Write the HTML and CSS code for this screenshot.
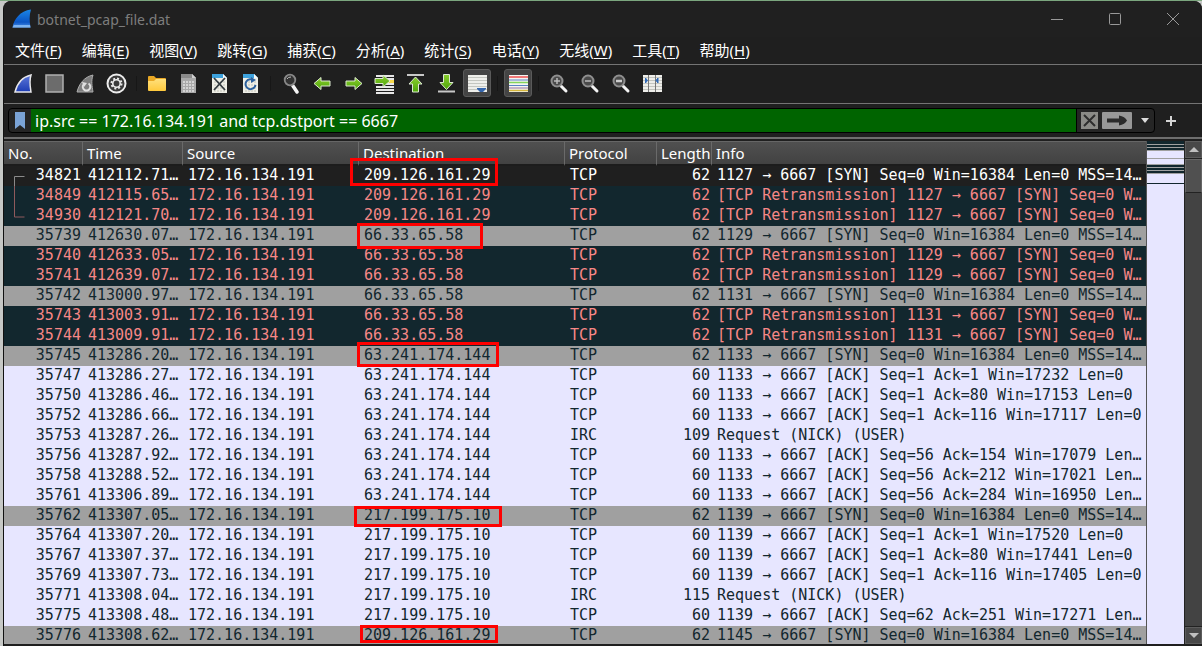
FILE: index.html
```html
<!DOCTYPE html>
<html lang="zh-CN">
<head>
<meta charset="utf-8">
<title>botnet_pcap_file.dat</title>
<link rel="stylesheet" href="styles.css">
</head>
<body>
<svg class="defs" aria-hidden="true">
  <defs>
    <linearGradient id="blueFin" x1="0" y1="0" x2="0" y2="1"><stop offset="0" stop-color="#1b86e6"/><stop offset=".7" stop-color="#0a55c4"/><stop offset="1" stop-color="#4f93ea"/></linearGradient>
    <linearGradient id="startFin" x1="0" y1="0" x2="0" y2="1"><stop offset="0" stop-color="#5d78d8"/><stop offset="1" stop-color="#1d3cb4"/></linearGradient>
    <linearGradient id="green" x1="0" y1="0" x2="0" y2="1"><stop offset="0" stop-color="#8ace2e"/><stop offset="1" stop-color="#4fa60a"/></linearGradient>
    <linearGradient id="folder" x1="0" y1="0" x2="0" y2="1"><stop offset="0" stop-color="#ffe07c"/><stop offset="1" stop-color="#ffc93c"/></linearGradient>
    <g id="page"><path d="M3 1h11l4 4v15H3z" fill="#eeeee6"/><path d="M3 1h11l4 4H3z" fill="#3da2dd"/><path d="M14 1v4h4z" fill="#f8f8f8"/><path d="M5 9h11M5 12h11M5 15h11M5 18h11" stroke="#c3c3b8" stroke-dasharray="2 1"/></g>
    <g id="lens"><path d="m12 13 5 5" stroke="#f4f4f4" stroke-width="3" stroke-linecap="round"/><circle cx="8" cy="8" r="5.500" fill="#4a4a4a" stroke="#8f8f8f" stroke-width="2"/></g>
    <g id="list"><path d="M1 2h19v17H1z" fill="#eeeeea"/><path d="M1 4.500h19M1 7.500h19M1 10.500h19M1 13.500h19M1 16.500h19" stroke="#c4c6c0"/></g>
  </defs>
</svg>
<div class="app">
  <header class="titlebar">
    <svg class="logo" viewBox="0 0 20 20" aria-hidden="true"><path d="M.5 18.500C2 10 8 2 19 .5c-2 6-1.500 12-.5 18z" fill="url(#blueFin)"/><path d="M.5 18.500 2 16h16l.5 2.500z" fill="#7db4f2"/></svg>
    <span class="title">botnet_pcap_file.dat</span>
    <button class="win" aria-label="Minimize"><svg viewBox="0 0 14 14"><path d="M1 7.500h12"/></svg></button>
    <button class="win" aria-label="Maximize"><svg viewBox="0 0 14 14"><rect x="1.500" y="1.500" width="11" height="11" rx="1"/></svg></button>
    <button class="win" aria-label="Close"><svg viewBox="0 0 14 14"><path d="m1 1 12 12M13 1 1 13"/></svg></button>
  </header>
  <nav class="menubar">
    <button>文件(<u>F</u>)</button><button>编辑(<u>E</u>)</button><button>视图(<u>V</u>)</button><button>跳转(<u>G</u>)</button><button>捕获(<u>C</u>)</button><button>分析(<u>A</u>)</button><button>统计(<u>S</u>)</button><button>电话(<u>Y</u>)</button><button>无线(<u>W</u>)</button><button>工具(<u>T</u>)</button><button>帮助(<u>H</u>)</button>
  </nav>
  <div class="toolbar">
    <button aria-label="Start capture"><svg viewBox="0 0 21 21"><path d="M2 19C4 11 9 4 18 2c-2 6-1 11 0 17z" fill="url(#startFin)" stroke="#e6e6ea" stroke-width="1.500"/></svg></button>
    <button aria-label="Stop capture"><svg viewBox="0 0 21 21"><rect x="2" y="2" width="17" height="17" fill="#6c6c6c" stroke="#b0b0b0" stroke-width="1.500"/></svg></button>
    <button aria-label="Restart capture"><svg viewBox="0 0 21 21"><path d="M2 19C4 11 9 4 18 2c-2 6-1 11 0 17z" fill="#7d7d7d" stroke="#adadad"/><path d="M8.500 11.500a3.800 3.800 0 1 0 5-1" fill="none" stroke="#e0e0e0" stroke-width="2"/><path d="m7 9 5 1-3 4z" fill="#e0e0e0"/></svg></button>
    <button aria-label="Capture options"><svg viewBox="0 0 21 21"><circle cx="10.500" cy="10.500" r="9" fill="#3a3a3a" stroke="#ececec" stroke-width="2"/><circle cx="10.500" cy="10.500" r="5" fill="none" stroke="#e8e8e8" stroke-width="2" stroke-dasharray="1.960 1.960"/><circle cx="10.500" cy="10.500" r="3.700" fill="none" stroke="#e8e8e8" stroke-width="1.600"/></svg></button>
    <span class="sep"></span>
    <button aria-label="Open"><svg viewBox="0 0 21 21"><path d="M1 4q0-1 1-1h5l2 2h9q1 0 1 1v4H1z" fill="#e9a825"/><path d="M1 8h6l2-2h10v11q0 1-1 1H2q-1 0-1-1z" fill="url(#folder)"/></svg></button>
    <button aria-label="Save"><svg viewBox="0 0 21 21"><path d="M3 1h11l4 4v15H3z" fill="#a9a9a9"/><path d="M3 1h11l4 4H3z" fill="#8b8b8b"/><path d="M14 1v4h4z" fill="#d0d0d0"/><path d="M5 9h11M5 12h11M5 15h11M5 18h11" stroke="#d4d4d4" stroke-width="2" stroke-dasharray="2 1"/></svg></button>
    <button aria-label="Close file"><svg viewBox="0 0 21 21"><use href="#page"/><path d="m5 5 11 12M16 5 5 17" stroke="#333b40" stroke-width="1.800"/></svg></button>
    <button aria-label="Reload file"><svg viewBox="0 0 21 21"><use href="#page"/><path d="M14 7.500A5 5 0 1 0 15.500 12" fill="none" stroke="#2c619e" stroke-width="2"/><path d="M11 4v6l5-3z" fill="#2c619e"/></svg></button>
    <span class="sep"></span>
    <button aria-label="Find packet"><svg viewBox="0 0 21 21"><path d="m12 13 4 6" stroke="#f4f4f4" stroke-width="3.500" stroke-linecap="round"/><circle cx="9" cy="7" r="5.300" fill="#333" stroke="#888" stroke-width="1.800"/><path d="M6 6q1-2 4-2" fill="none" stroke="#bbb"/></svg></button>
    <button aria-label="Back"><svg viewBox="0 0 21 21"><path d="m2 10.500 7-6v3.500h9v5H9v3.500z" fill="url(#green)" stroke="#dde9d2"/></svg></button>
    <button aria-label="Forward"><svg viewBox="0 0 21 21"><path d="m19 10.500-7-6v3.500H3v5h9v3.500z" fill="url(#green)" stroke="#dde9d2"/></svg></button>
    <button aria-label="Go to packet"><svg viewBox="0 0 21 21"><path d="M2 3h18M2 14h18M2 17h18M2 20h18" stroke="#e6e6e6" stroke-width="2"/><path d="M12 6h8M12 11h8" stroke="#e6e6e6" stroke-width="2"/><path d="M12 8.500h8" stroke="#f6d84a" stroke-width="3"/><path d="M16 8 9 2v3.500H1v5h8V14z" fill="url(#green)" stroke="#dde9d2"/></svg></button>
    <button aria-label="First packet"><svg viewBox="0 0 21 21"><path d="M2 2h17" stroke="#c8c8c8" stroke-width="1.800"/><path d="m10.500 4 6.500 7h-3.500v8h-6v-8H4z" fill="url(#green)" stroke="#dde9d2"/></svg></button>
    <button aria-label="Last packet"><svg viewBox="0 0 21 21"><path d="M2 18.500h17" stroke="#c8c8c8" stroke-width="1.800"/><path d="m10.500 16.500 6.500-7h-3.500v-8h-6v8H4z" fill="url(#green)" stroke="#dde9d2"/></svg></button>
    <button class="on" aria-label="Auto scroll" aria-pressed="true"><svg viewBox="0 0 21 21"><use href="#list"/><path d="M10 15h9v1l-3 3h-3l-3-3z" fill="#3566ad"/></svg></button>
    <span class="sep"></span>
    <button class="on" aria-label="Colorize" aria-pressed="true"><svg viewBox="0 0 21 21"><path d="M1 2h19v17H1z" fill="#f4f4f1"/><path d="M1 4h19" stroke="#ef4f4f" stroke-width="1.500"/><path d="M1 7h19" stroke="#5a82c4"/><path d="M1 9.500h19" stroke="#84d45c" stroke-width="1.500"/><path d="M1 12.500h19" stroke="#5a82c4"/><path d="M1 15h19" stroke="#93719f"/><path d="M1 17.500h19" stroke="#d5b63c" stroke-width="1.500"/></svg></button>
    <span class="sep"></span>
    <button aria-label="Zoom in"><svg viewBox="0 0 21 21"><use href="#lens"/><path d="M5 8h6M8 5v6" stroke="#bbb" stroke-width="1.500"/></svg></button>
    <button aria-label="Zoom out"><svg viewBox="0 0 21 21"><use href="#lens"/><path d="M5 8h6" stroke="#bbb" stroke-width="1.500"/></svg></button>
    <button aria-label="Normal size"><svg viewBox="0 0 21 21"><use href="#lens"/><path d="M5 8h6" stroke="#ccc" stroke-width="2.500"/></svg></button>
    <button aria-label="Resize columns"><svg viewBox="0 0 21 21"><use href="#list"/><path d="M6.500 2v17M13.500 2v17" stroke="#777"/><path d="m3.500 5 2 2.500-2 2.500zM16 5l-2 2.500 2 2.500z" fill="#2f68b5" stroke="#2f68b5"/></svg></button>
  </div>
  <div class="filterbar">
    <div class="filter">
      <button class="bookmark" aria-label="Bookmarks"><svg viewBox="0 0 12 18"><path d="M1 0h10v17l-5-4-5 4z" fill="#7aa3d6"/></svg></button>
      <input type="text" aria-label="Display filter" value="ip.src == 172.16.134.191 and tcp.dstport == 6667" spellcheck="false">
      <button class="clear" aria-label="Clear"><svg viewBox="0 0 17 17"><path fill="#8b8b87" d="M0 0h17v17H0z"/><path d="m3 3 11 11M14 3 3 14" stroke="#2d2d2d" stroke-width="2"/></svg></button>
      <button class="apply" aria-label="Apply"><svg viewBox="0 0 30 17"><rect width="30" height="17" rx="1" fill="#989898"/><path d="M5 6.500h12V3.500q6 1 8 5-2 4-8 5v-3H5z" fill="#2b2b2b"/></svg></button>
      <button class="recent" aria-label="Recent filters"><svg viewBox="0 0 8 5"><path d="M0 0h8L4 5z" fill="#ddd"/></svg></button>
    </div>
    <button class="add" aria-label="Add filter"><svg viewBox="0 0 10 10"><path d="M5 0v10M0 5h10" stroke="#d4d4d4" stroke-width="2"/></svg></button>
  </div>
  <main class="packets">
    <div class="list">
      <table>
        <colgroup><col class="c-no"><col class="c-time"><col class="c-src"><col class="c-dst"><col class="c-proto"><col class="c-len"><col></colgroup>
        <thead><tr><th>No.</th><th>Time</th><th>Source</th><th>Destination</th><th>Protocol</th><th>Length</th><th>Info</th></tr></thead>
        <tbody>
          <tr class="sel"><td><svg class="bracket" viewBox="0 0 11 42" aria-hidden="true"><path d="M10.500 .5H.5v10" stroke="#8a8a8a"/><path d="M.5 10v31h10" stroke="#8f5a5c"/></svg>34821</td><td>412112.71…</td><td>172.16.134.191</td><td>209.126.161.29</td><td>TCP</td><td>62</td><td>1127 → 6667 [SYN] Seq=0 Win=16384 Len=0 MSS=14…</td></tr>
          <tr class="bad"><td>34849</td><td>412115.65…</td><td>172.16.134.191</td><td>209.126.161.29</td><td>TCP</td><td>62</td><td>[TCP Retransmission] 1127 → 6667 [SYN] Seq=0 W…</td></tr>
          <tr class="bad"><td>34930</td><td>412121.70…</td><td>172.16.134.191</td><td>209.126.161.29</td><td>TCP</td><td>62</td><td>[TCP Retransmission] 1127 → 6667 [SYN] Seq=0 W…</td></tr>
          <tr class="syn"><td>35739</td><td>412630.07…</td><td>172.16.134.191</td><td>66.33.65.58</td><td>TCP</td><td>62</td><td>1129 → 6667 [SYN] Seq=0 Win=16384 Len=0 MSS=14…</td></tr>
          <tr class="bad"><td>35740</td><td>412633.05…</td><td>172.16.134.191</td><td>66.33.65.58</td><td>TCP</td><td>62</td><td>[TCP Retransmission] 1129 → 6667 [SYN] Seq=0 W…</td></tr>
          <tr class="bad"><td>35741</td><td>412639.07…</td><td>172.16.134.191</td><td>66.33.65.58</td><td>TCP</td><td>62</td><td>[TCP Retransmission] 1129 → 6667 [SYN] Seq=0 W…</td></tr>
          <tr class="syn"><td>35742</td><td>413000.97…</td><td>172.16.134.191</td><td>66.33.65.58</td><td>TCP</td><td>62</td><td>1131 → 6667 [SYN] Seq=0 Win=16384 Len=0 MSS=14…</td></tr>
          <tr class="bad"><td>35743</td><td>413003.91…</td><td>172.16.134.191</td><td>66.33.65.58</td><td>TCP</td><td>62</td><td>[TCP Retransmission] 1131 → 6667 [SYN] Seq=0 W…</td></tr>
          <tr class="bad"><td>35744</td><td>413009.91…</td><td>172.16.134.191</td><td>66.33.65.58</td><td>TCP</td><td>62</td><td>[TCP Retransmission] 1131 → 6667 [SYN] Seq=0 W…</td></tr>
          <tr class="syn"><td>35745</td><td>413286.20…</td><td>172.16.134.191</td><td>63.241.174.144</td><td>TCP</td><td>62</td><td>1133 → 6667 [SYN] Seq=0 Win=16384 Len=0 MSS=14…</td></tr>
          <tr><td>35747</td><td>413286.27…</td><td>172.16.134.191</td><td>63.241.174.144</td><td>TCP</td><td>60</td><td>1133 → 6667 [ACK] Seq=1 Ack=1 Win=17232 Len=0</td></tr>
          <tr><td>35750</td><td>413286.46…</td><td>172.16.134.191</td><td>63.241.174.144</td><td>TCP</td><td>60</td><td>1133 → 6667 [ACK] Seq=1 Ack=80 Win=17153 Len=0</td></tr>
          <tr><td>35752</td><td>413286.66…</td><td>172.16.134.191</td><td>63.241.174.144</td><td>TCP</td><td>60</td><td>1133 → 6667 [ACK] Seq=1 Ack=116 Win=17117 Len=0</td></tr>
          <tr><td>35753</td><td>413287.26…</td><td>172.16.134.191</td><td>63.241.174.144</td><td>IRC</td><td>109</td><td>Request (NICK) (USER)</td></tr>
          <tr><td>35756</td><td>413287.92…</td><td>172.16.134.191</td><td>63.241.174.144</td><td>TCP</td><td>60</td><td>1133 → 6667 [ACK] Seq=56 Ack=154 Win=17079 Len…</td></tr>
          <tr><td>35758</td><td>413288.52…</td><td>172.16.134.191</td><td>63.241.174.144</td><td>TCP</td><td>60</td><td>1133 → 6667 [ACK] Seq=56 Ack=212 Win=17021 Len…</td></tr>
          <tr><td>35761</td><td>413306.89…</td><td>172.16.134.191</td><td>63.241.174.144</td><td>TCP</td><td>60</td><td>1133 → 6667 [ACK] Seq=56 Ack=284 Win=16950 Len…</td></tr>
          <tr class="syn"><td>35762</td><td>413307.05…</td><td>172.16.134.191</td><td>217.199.175.10</td><td>TCP</td><td>62</td><td>1139 → 6667 [SYN] Seq=0 Win=16384 Len=0 MSS=14…</td></tr>
          <tr><td>35764</td><td>413307.20…</td><td>172.16.134.191</td><td>217.199.175.10</td><td>TCP</td><td>60</td><td>1139 → 6667 [ACK] Seq=1 Ack=1 Win=17520 Len=0</td></tr>
          <tr><td>35767</td><td>413307.37…</td><td>172.16.134.191</td><td>217.199.175.10</td><td>TCP</td><td>60</td><td>1139 → 6667 [ACK] Seq=1 Ack=80 Win=17441 Len=0</td></tr>
          <tr><td>35769</td><td>413307.73…</td><td>172.16.134.191</td><td>217.199.175.10</td><td>TCP</td><td>60</td><td>1139 → 6667 [ACK] Seq=1 Ack=116 Win=17405 Len=0</td></tr>
          <tr><td>35771</td><td>413308.04…</td><td>172.16.134.191</td><td>217.199.175.10</td><td>IRC</td><td>115</td><td>Request (NICK) (USER)</td></tr>
          <tr><td>35775</td><td>413308.48…</td><td>172.16.134.191</td><td>217.199.175.10</td><td>TCP</td><td>60</td><td>1139 → 6667 [ACK] Seq=62 Ack=251 Win=17271 Len…</td></tr>
          <tr class="syn"><td>35776</td><td>413308.62…</td><td>172.16.134.191</td><td>209.126.161.29</td><td>TCP</td><td>62</td><td>1145 → 6667 [SYN] Seq=0 Win=16384 Len=0 MSS=14…</td></tr>
        </tbody>
      </table>
    </div>
    <div class="minimap"></div>
    <div class="scrollbar">
      <button aria-label="Scroll up"><svg viewBox="0 0 10 5"><path d="M0 5h10L5 0z" fill="#c0c0c0"/></svg></button>
      <div class="track"><div class="thumb"></div></div>
      <button aria-label="Scroll down"><svg viewBox="0 0 10 5"><path d="M0 0h10L5 5z" fill="#c0c0c0"/></svg></button>
    </div>
  </main>
</div>
<div class="mark m1"></div><div class="mark m2"></div><div class="mark m3"></div><div class="mark m4"></div><div class="mark m5"></div>
</body>
</html>
```
FILE: styles.css
```css
* { box-sizing: border-box; }
html { background: #c6c8c6; }
body {
  margin: 0;
  height: 100vh;
  padding: 1px 0 0 3px;
  border: 0;
  background: linear-gradient(#7ba67e 0 1px, transparent 1px);
  font-family: "Noto Sans", "Noto Sans CJK SC", sans-serif;
  font-size: 15px;
  color: #fff;
  overflow: hidden;
}
button { margin: 0; padding: 0; border: 0; background: none; color: inherit; font: inherit; display: flex; align-items: center; justify-content: center; }
svg { display: block; }
.defs { position: absolute; width: 0; height: 0; }
.app { height: 100%; display: flex; flex-direction: column; background: #1f1f1f; border-radius: 8px 8px 0 0; padding-bottom: 2px; border-left: 1px solid #111; overflow: hidden; }

.titlebar { display: flex; align-items: center; height: 36px; flex: none; padding-left: 8px; background: #202020; }
.logo { width: 20px; height: 20px; }
.title { flex: 1; margin-left: 5px; color: #7d7d7d; font-size: 14px; }
.win { width: 58px; height: 34px; }
.win svg { width: 14px; height: 14px; fill: none; stroke: #999; }

.menubar { display: flex; height: 28px; flex: none; padding: 0 0 2px 1px; border-bottom: 1px solid #747474; }
.menubar button { padding: 0 10px; white-space: pre; }
.menubar u { text-underline-offset: 2px; }

.toolbar { display: flex; align-items: center; gap: 3px; height: 39px; flex: none; padding: 0 0 2px 5px; border-bottom: 1px solid #747474; }
.toolbar button { width: 28px; height: 28px; flex: none; }
.toolbar svg { width: 21px; height: 21px; }
.toolbar .on { background: #444; border: 1px solid #5a5a5a; border-radius: 3px; }
.sep { width: 7px; height: 15px; background: linear-gradient(90deg, transparent 3px, #171717 3px 4px, transparent 4px); }

.filterbar { display: flex; align-items: center; height: 33px; flex: none; padding-left: 4px; }
.filter { flex: 1; display: flex; align-items: center; height: 25px; border: 1px solid #000; border-radius: 4px; background: #252525; overflow: hidden; }
.bookmark { width: 22px; height: 100%; }
.bookmark svg { width: 12px; height: 18px; }
.filter input { flex: 1; min-width: 0; height: 100%; border: 0; padding: 0 4px; background: #006400; color: #fff; font: inherit; font-size: 16px; outline: 0; border-right: 1px solid #000; }
.clear { margin-left: 4px; }
.clear svg { width: 17px; height: 17px; }
.apply { margin-left: 4px; }
.apply svg { width: 30px; height: 17px; }
.recent { width: 22px; height: 100%; padding-left: 4px; }
.recent svg { width: 8px; height: 5px; }
.add { width: 47px; height: 25px; padding-right: 15px; }
.add svg { width: 10px; height: 10px; }

.packets { flex: 1; min-height: 0; display: flex; border-top: 2px solid #6e6e6e; padding-top: 2px; }
.list { flex: 1; min-width: 0; overflow: hidden; border-right: 1px solid #555; background: #e7e6ff; }
table { width: 100%; table-layout: fixed; border-collapse: separate; border-spacing: 0; }
.c-no { width: 79px; }
.c-time { width: 100px; }
.c-src { width: 176px; }
.c-dst { width: 206px; }
.c-proto { width: 92px; }
.c-len { width: 55px; }
th { height: 25px; padding: 0 0 0 4px; text-align: left; font-weight: 400; line-height: 22px; white-space: nowrap; background: linear-gradient(#505050, #424242); border-right: 1px solid #6a6a6a; border-top: 1px solid #666; border-bottom: 2px solid #1c1c1c; }
th:last-child { border-right: 0; }
td { height: 20px; padding: 0 0 2px 5px; line-height: 18px; font-family: "DejaVu Sans Mono", monospace; white-space: pre; overflow: hidden; color: #12272e; }
td:nth-child(1), td:nth-child(6) { text-align: right; padding: 0 2px 2px 0; }
.sel { background: #1f1f1f; }
.sel td { color: #fff; }
.sel td:first-child { position: relative; overflow: visible; }
.bad { background: #12272e; }
.bad td { color: #f78787; }
.syn { background: #a0a0a0; }
.bracket { position: absolute; left: 10px; top: 10px; width: 11px; height: 42px; fill: none; }

.minimap { width: 37px; background: linear-gradient(#12272e 0 3px, #a0a0a0 3px 4px, #12272e 4px 6px, #a0a0a0 6px 7px, #12272e 7px 9px, #a0a0a0 9px 10px, #e7e6ff 10px 17px, #a0a0a0 17px 18px, #e7e6ff 18px 23px, #a0a0a0 23px 24px, #12272e 24px 26px, #a0a0a0 26px 27px, #12272e 27px 29px, #a0a0a0 29px 30px, #12272e 30px 32px, #a0a0a0 32px 33px, #e7e6ff 33px 42px, #12272e 42px 43px, #e7e6ff 43px); }
.scrollbar { width: 18px; display: flex; flex-direction: column; background: #444; border-left: 1px solid #222; }
.scrollbar button { height: 17px; flex: none; background: #484848; border: 1px solid #5c5c5c; }
.scrollbar svg { width: 10px; height: 5px; }
.track { flex: 1; background: #434343; border-top: 1px solid #222; border-bottom: 1px solid #222; }
.thumb { height: 34px; background: #505050; border: 1px solid #666; border-bottom: 1px solid #222; }

.mark { position: absolute; border: 3px solid #fe0000; pointer-events: none; }
.m1 { left: 350px; top: 158px; width: 148px; height: 28px; }
.m2 { left: 357px; top: 223px; width: 126px; height: 26px; }
.m3 { left: 357px; top: 342px; width: 142px; height: 25px; }
.m4 { left: 354px; top: 506px; width: 148px; height: 21px; }
.m5 { left: 360px; top: 625px; width: 138px; height: 18px; }
```
